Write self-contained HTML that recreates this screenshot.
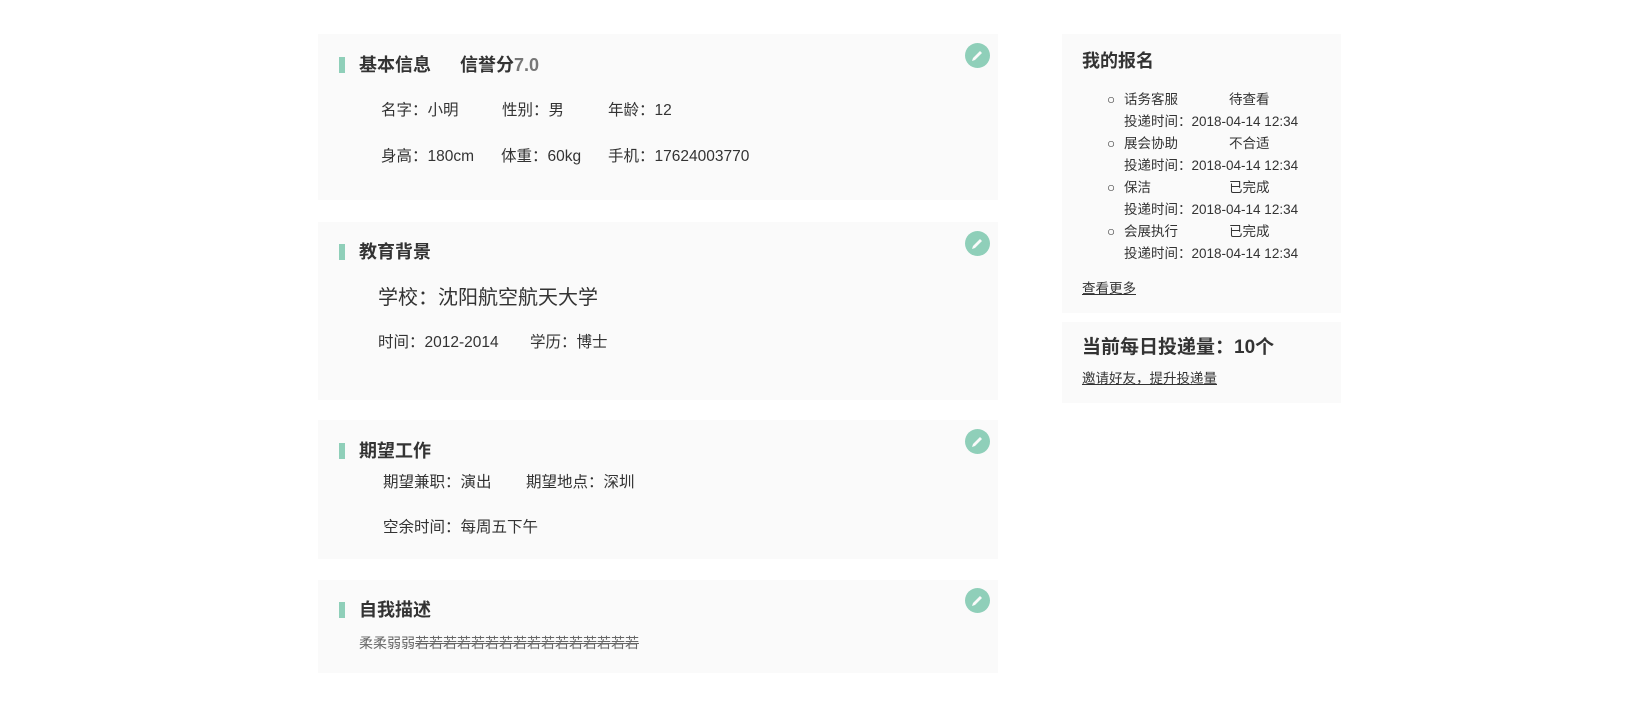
<!DOCTYPE html>
<html><head><meta charset="utf-8"><style>
*{margin:0;padding:0;box-sizing:border-box}
body{width:1632px;height:720px;background:#fff;font-family:"Liberation Sans","Noto Sans CJK SC",sans-serif;color:#333;position:relative;overflow:hidden}
.card{position:absolute;background:#fafafa}
.t{position:absolute;white-space:nowrap;line-height:1}
.bar{position:absolute;width:6px;height:16px;background:#8fcfb9}
.h{font-size:18px;font-weight:bold;color:#333}
.r{font-size:15.5px;color:#333}
.ic{position:absolute;width:25px;height:25px;border-radius:50%;background:#8fcfb9}
.ic svg{position:absolute;left:0;top:0}
.s{font-size:13.5px;color:#333}
.li{position:absolute;left:0;font-size:13.5px;white-space:nowrap}
</style></head><body>
<div class="card" style="left:318px;top:34px;width:680px;height:166px"></div>
<div class="card" style="left:318px;top:222px;width:680px;height:178px"></div>
<div class="card" style="left:318px;top:420px;width:680px;height:139px"></div>
<div class="card" style="left:318px;top:580px;width:680px;height:93px"></div>
<div class="card" style="left:1062px;top:34px;width:279px;height:279px"></div>
<div class="card" style="left:1062px;top:322px;width:279px;height:81px"></div>

<svg width="0" height="0" style="position:absolute"><defs><g id="pen"><path d="M7 18 L8 15 L15 8 L17 10 L10 17 Z" fill="#fafafa"/></g></defs></svg>

<div class="bar" style="left:339px;top:57px"></div>
<div class="t h" style="left:359px;top:56px">基本信息</div>
<div class="t h" style="left:460px;top:56px">信誉分<span style="color:#777">7.0</span></div>
<div class="t r" style="left:381px;top:103px">名字：小明</div>
<div class="t r" style="left:502px;top:103px">性别：男</div>
<div class="t r" style="left:608px;top:103px">年龄：12</div>
<div class="t r" style="left:381px;top:149px">身高：180cm</div>
<div class="t r" style="left:501px;top:149px">体重：60kg</div>
<div class="t r" style="left:608px;top:149px">手机：17624003770</div>
<div class="ic" style="left:965px;top:43px"><svg width="25" height="25"><use href="#pen"/></svg></div>

<div class="bar" style="left:339px;top:244px"></div>
<div class="t h" style="left:359px;top:243px">教育背景</div>
<div class="t" style="left:378px;top:288px;font-size:20px">学校：沈阳航空航天大学</div>
<div class="t r" style="left:378px;top:335px">时间：2012-2014</div>
<div class="t r" style="left:530px;top:335px">学历：博士</div>
<div class="ic" style="left:965px;top:231px"><svg width="25" height="25"><use href="#pen"/></svg></div>

<div class="bar" style="left:339px;top:443px"></div>
<div class="t h" style="left:359px;top:442px">期望工作</div>
<div class="t r" style="left:383px;top:475px">期望兼职：演出</div>
<div class="t r" style="left:526px;top:475px">期望地点：深圳</div>
<div class="t r" style="left:383px;top:520px">空余时间：每周五下午</div>
<div class="ic" style="left:965px;top:429px"><svg width="25" height="25"><use href="#pen"/></svg></div>

<div class="bar" style="left:339px;top:602px"></div>
<div class="t h" style="left:359px;top:601px">自我描述</div>
<div class="t" style="left:359px;top:636px;font-size:14px;color:#666">柔柔弱弱<s>若若若若若若若若若若若若若若若若</s></div>
<div class="ic" style="left:965px;top:588px"><svg width="25" height="25"><use href="#pen"/></svg></div>

<div class="t h" style="left:1082px;top:52px">我的报名</div>
<div style="position:absolute;left:1107px;top:89px;width:240px;height:180px;font-size:13.5px;line-height:22px;color:#333">
<div class="li" style="top:0">○<span style="position:absolute;left:17px">话务客服</span><span style="position:absolute;left:122px">待查看</span></div>
<div class="li" style="top:22px;left:17px">投递时间：2018-04-14 12:34</div>
<div class="li" style="top:44px">○<span style="position:absolute;left:17px">展会协助</span><span style="position:absolute;left:122px">不合适</span></div>
<div class="li" style="top:66px;left:17px">投递时间：2018-04-14 12:34</div>
<div class="li" style="top:88px">○<span style="position:absolute;left:17px">保洁</span><span style="position:absolute;left:122px">已完成</span></div>
<div class="li" style="top:110px;left:17px">投递时间：2018-04-14 12:34</div>
<div class="li" style="top:132px">○<span style="position:absolute;left:17px">会展执行</span><span style="position:absolute;left:122px">已完成</span></div>
<div class="li" style="top:154px;left:17px">投递时间：2018-04-14 12:34</div>
</div>
<div class="t s" style="left:1082px;top:282px;text-decoration:underline">查看更多</div>
<div class="t" style="left:1082px;top:338px;font-size:19px;font-weight:bold">当前每日投递量：10个</div>
<div class="t s" style="left:1082px;top:372px;text-decoration:underline">邀请好友，提升投递量</div>
</body></html>
